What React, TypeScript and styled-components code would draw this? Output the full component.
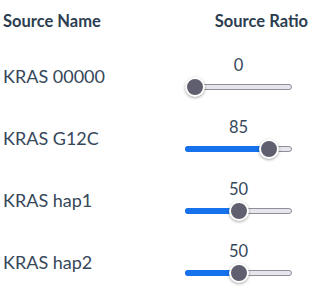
import React from 'react';
import styled, { createGlobalStyle } from 'styled-components';

const GlobalStyle = createGlobalStyle`
    body {
        margin: 0;
        background: #ffffff;
        font-family: Lato, "Open Sans", sans-serif;
        color: #2c3e50;
    }
`

const Table = styled.div`
    display: flex;
    flex-direction: column;
    width: 315px;
`

const HeaderRow = styled.div`
    display: flex;
    flex-direction: row;
    justify-content: space-between;
    height: 45px;
    padding: 11px 7px 0 3px;
    box-sizing: border-box;
`

const HeadCell = styled.div`
    font-size: 16.5px;
    font-weight: 700;
    line-height: 20px;
    color: #2c3e50;
`

const Row = styled.div`
    display: flex;
    flex-direction: row;
    justify-content: space-between;
    align-items: center;
    height: 62px;
    padding-left: 3px;
`

const Name = styled.div`
    font-size: 18px;
    line-height: 22px;
    color: #36475a;
`

const RatioCell = styled.div`
    display: flex;
    flex-direction: column;
    align-items: center;
    gap: 2px;
    width: 107px;
    margin-right: 23px;
`

const Value = styled.div`
    font-size: 16.5px;
    line-height: 20px;
    color: #36475a;
`

const SliderBox = styled.div`
    position: relative;
    display: flex;
    align-items: center;
    width: 100%;
    height: 20px;
`

const Track = styled.div`
    position: relative;
    width: 100%;
    height: 6px;
    box-sizing: border-box;
    border: 1px solid #8f8f9c;
    border-radius: 3px;
    background: #e6e6ec;
`

const Fill = styled.div`
    position: absolute;
    top: -1px;
    bottom: -1px;
    left: -1px;
    border-radius: 3px;
    background: #1672ec;
`

const Thumb = styled.div`
    position: absolute;
    top: 0;
    width: 20px;
    height: 20px;
    box-sizing: border-box;
    border-radius: 50%;
    border: 2px solid #ffffff;
    background: #5f5f6f;
    box-shadow: 0 1px 3px rgba(0, 0, 0, 0.35);
`

interface Source {
    name: string;
    ratio: number;
}

const sources: Source[] = [
    { name: 'KRAS 00000', ratio: 0 },
    { name: 'KRAS G12C', ratio: 85 },
    { name: 'KRAS hap1', ratio: 50 },
    { name: 'KRAS hap2', ratio: 50 },
]

const THUMB = 20;
const WIDTH = 107;

function Slider({ value }: { value: number }): JSX.Element {
    const left = (WIDTH - THUMB) * value / 100;
    return (
        <SliderBox>
            <Track>
                {value > 0 && <Fill style={{ width: left + THUMB / 2 }} />}
            </Track>
            <Thumb style={{ left }} />
        </SliderBox>
    )
}

function SourceRow({ source }: { source: Source }): JSX.Element {
    return (
        <Row>
            <Name>{source.name}</Name>
            <RatioCell>
                <Value>{source.ratio}</Value>
                <Slider value={source.ratio} />
            </RatioCell>
        </Row>
    )
}

export default function App(): JSX.Element {
    return (
        <>
            <GlobalStyle />
            <Table>
                <HeaderRow>
                    <HeadCell>Source Name</HeadCell>
                    <HeadCell>Source Ratio</HeadCell>
                </HeaderRow>
                {sources.map((s, i) => <SourceRow source={s} key={`source-${i}`} />)}
            </Table>
        </>
    )
}
